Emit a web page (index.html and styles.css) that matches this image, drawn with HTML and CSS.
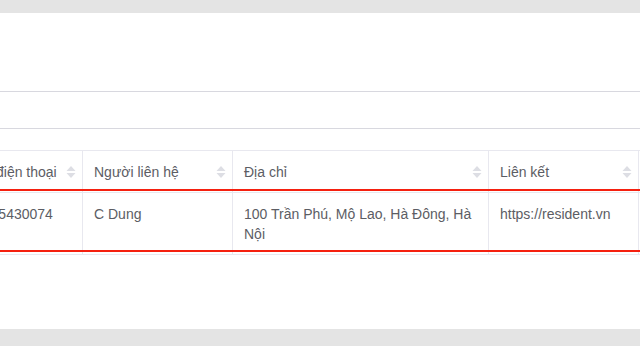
FILE: index.html
```html
<!DOCTYPE html>
<html lang="vi">
<head>
<meta charset="utf-8">
<title>Danh sách</title>
<link rel="stylesheet" href="styles.css">
</head>
<body>
<div class="card">
  <div class="card-head"></div>
  <div class="toolbar"></div>
  <div class="table-area">
    <div class="table-wrap">
      <table class="data-table">
        <colgroup>
          <col class="c1"><col class="c2"><col class="c3"><col class="c4"><col class="c5">
        </colgroup>
        <thead>
          <tr>
            <th><div class="th-in"><span>Số điện thoại</span><svg class="sort" viewBox="0 0 10 14" width="10" height="14"><path d="M5 1 L9.5 6 L0.5 6 Z"/><path d="M0.5 8 L9.5 8 L5 13 Z"/></svg></div></th>
            <th><div class="th-in"><span>Người liên hệ</span><svg class="sort" viewBox="0 0 10 14" width="10" height="14"><path d="M5 1 L9.5 6 L0.5 6 Z"/><path d="M0.5 8 L9.5 8 L5 13 Z"/></svg></div></th>
            <th><div class="th-in"><span>Địa chỉ</span><svg class="sort" viewBox="0 0 10 14" width="10" height="14"><path d="M5 1 L9.5 6 L0.5 6 Z"/><path d="M0.5 8 L9.5 8 L5 13 Z"/></svg></div></th>
            <th><div class="th-in"><span>Liên kết</span><svg class="sort" viewBox="0 0 10 14" width="10" height="14"><path d="M5 1 L9.5 6 L0.5 6 Z"/><path d="M0.5 8 L9.5 8 L5 13 Z"/></svg></div></th>
            <th><div class="th-in"><span>Thao tác</span></div></th>
          </tr>
        </thead>
        <tbody>
          <tr>
            <td>0985430074</td>
            <td>C Dung</td>
            <td>100 Trần Phú, Mộ Lao, Hà Đông, Hà Nội</td>
            <td>https://resident.vn</td>
            <td></td>
          </tr>
        </tbody>
      </table>
      <div class="row-mark"></div>
    </div>
  </div>
</div>
</body>
</html>
```
FILE: styles.css
```css
html, body {
  margin: 0;
  padding: 0;
}
body {
  background: #e4e4e4;
  font-family: "Liberation Sans", Arial, sans-serif;
  font-size: 14px;
  color: #5c5d64;
  padding: 13px 0 17px;
  height: 346px;
  box-sizing: border-box;
  overflow: hidden;
}
.card {
  background: #fff;
  height: 316px;
  display: flex;
  flex-direction: column;
}
.card-head {
  height: 78px;
  border-bottom: 1px solid #d8d8df;
}
.toolbar {
  height: 36px;
  border-bottom: 1px solid #d8d8df;
}
.table-area {
  padding-top: 21px;
}
.table-wrap {
  position: relative;
  overflow: hidden;
}
.data-table {
  margin-left: -36px;
  border-collapse: separate;
  border-spacing: 0;
  table-layout: fixed;
  width: 825px;
  border-top: 1px solid #e8e8ef;
}
.c1 { width: 119px; }
.c2 { width: 150px; }
.c3 { width: 256px; }
.c4 { width: 150px; }
.c5 { width: 150px; }
.data-table th,
.data-table td {
  border-right: 1px solid #e8e8ef;
  border-bottom: 1px solid #e8e8ef;
  text-align: left;
  vertical-align: top;
  line-height: 20px;
  font-weight: normal;
}
.data-table th {
  padding: 11px 6px 10px 11px;
  color: #5c5d64;
}
.data-table td {
  padding: 11px 10px 10px 11px;
  color: #5c5d64;
}
.th-in {
  display: flex;
  align-items: center;
  justify-content: space-between;
  white-space: nowrap;
}
.sort {
  flex: none;
  fill: #dddee4;
  display: block;
}
.row-mark {
  position: absolute;
  left: 0;
  right: 0;
  top: 39px;
  height: 59px;
  border-top: 2px solid #f5200f;
  border-bottom: 2px solid #f5200f;
}
```
